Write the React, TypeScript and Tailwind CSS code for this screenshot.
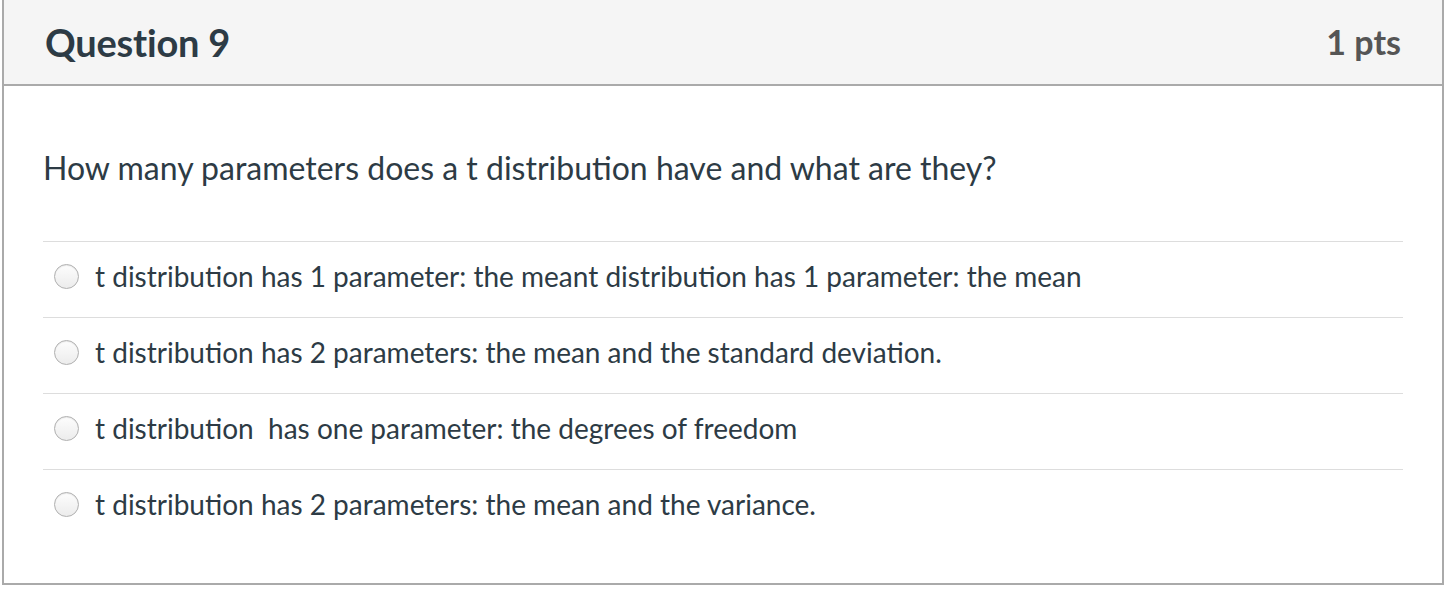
const ANSWERS = [
  "t distribution has 1 parameter: the meant distribution has 1 parameter: the mean",
  "t distribution has 2 parameters: the mean and the standard deviation.",
  "t distribution\u00a0 has one parameter: the degrees of freedom",
  "t distribution has 2 parameters: the mean and the variance.",
];

function Radio() {
  return (
    <span className="inline-block h-[25px] w-[25px] shrink-0 rounded-full border border-[#b0b0b0] bg-gradient-to-b from-[#fdfdfd] to-[#ececec] shadow-[inset_0_1px_1px_rgba(0,0,0,0.08)]" />
  );
}

export default function App() {
  return (
    <div
      className="bg-white text-[#2d3b45]"
      style={{ fontFamily: "Lato, 'Noto Sans', sans-serif" }}
    >
      <div className="ml-[2px] w-[1442px] border-x-2 border-b-2 border-[#aaaaaa]">
        {/* header */}
        <div className="flex h-[86px] items-center justify-between border-b-2 border-[#aaaaaa] bg-[#f5f5f5] pl-[41px] pr-[41px]">
          <h2 className="text-[38px] font-bold leading-none tracking-[-0.2px]">Question 9</h2>
          <div className="text-[34px] font-bold leading-none text-[#555555]">1 pts</div>
        </div>

        {/* body */}
        <div className="px-[39px] pb-[38px]">
          <p className="pt-[64px] pb-[55px] text-[32px] leading-[36px]">
            How many parameters does a t distribution have and what are they?
          </p>
          <div>
            {ANSWERS.map((a, i) => (
              <div
                key={i}
                className="flex h-[76px] items-center gap-[16px] border-t border-[#dddddd] pb-[6px] pl-[11px]"
              >
                <Radio />
                <span className="pb-[2px] text-[28px] leading-none">{a}</span>
              </div>
            ))}
          </div>
        </div>
      </div>
    </div>
  );
}
